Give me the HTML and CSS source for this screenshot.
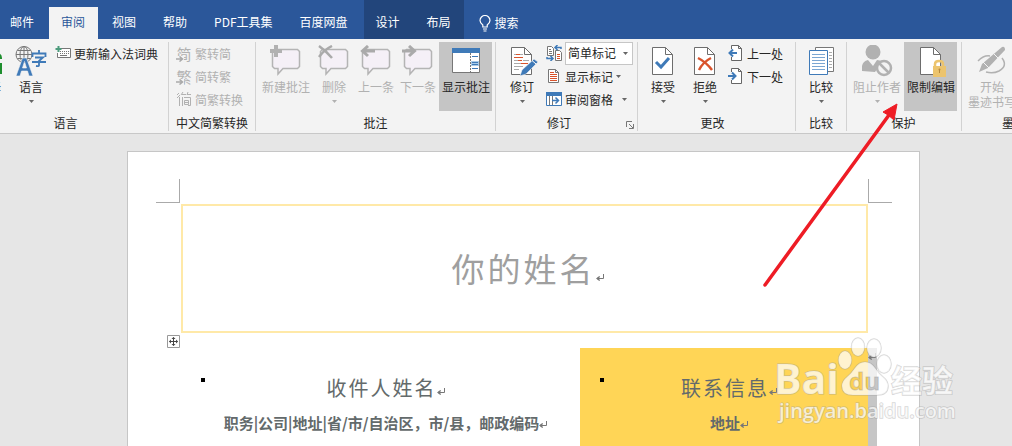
FILE: index.html
```html
<!DOCTYPE html>
<html lang="zh-CN">
<head>
<meta charset="utf-8">
<title>文档 - 审阅</title>
<link rel="stylesheet" href="styles.css">
</head>
<body>
<svg class="defs" aria-hidden="true">
  <symbol id="bubble" viewBox="0 0 32 32"><path d="M4.500 4.500h23l2 2v15l-2 2H13L8 29v-5.500H4.500l-2-2v-15z" fill="#f5f0f7" stroke="#b4b4b4" stroke-width="1.500"/></symbol>
  <symbol id="doc" viewBox="0 0 32 32"><path d="M5.500 2.500h13l7 7v20h-20z" fill="#fff" stroke="#6d6d6d"/><path d="M18.500 2.500v7h7" fill="none" stroke="#6d6d6d"/></symbol>
  <symbol id="caret" viewBox="0 0 5 3"><path d="M0 0h5L2.500 3z" fill="currentColor"/></symbol>
  <symbol id="ret" viewBox="0 0 8 8"><path d="M7.500 0v4.500h-6M3.500 2.500l-2.500 2 2.500 2" fill="none" stroke="currentColor"/><path d="M0 4.500l3.500-2.500v5z" fill="currentColor"/></symbol>
</svg>

<header class="tabs" role="tablist">
  <button class="tab first">邮件</button>
  <button class="tab active">审阅</button>
  <button class="tab">视图</button>
  <button class="tab">帮助</button>
  <button class="tab">PDF工具集</button>
  <button class="tab">百度网盘</button>
  <div class="context"><button class="tab">设计</button><button class="tab">布局</button></div>
  <button class="search"><svg width="12" height="17" viewBox="0 0 12 17" fill="none" stroke="#fff" stroke-width="1.200"><path d="M3.800 12V10C2 8.500 1 7.500 1 5.500a5 5 0 0 1 10 0c0 2-1 3-2.800 4.500v2zM4 14h4M4.500 16h3"/></svg>搜索</button>
</header>

<main class="ribbon">
  <section class="group lang">
    <div class="body">
      <button class="big edge"><svg class="i32" viewBox="0 0 32 32"><path d="M20 8h5q4 1 4 5v1h-4M24 18h5v11h-5z" fill="#1e8e2e"/></svg><span>翻译</span></button>
      <button class="big"><svg class="i32" viewBox="0 0 32 32"><g fill="none" stroke="#777"><circle cx="9" cy="9.500" r="8"/><ellipse cx="9" cy="9.500" rx="4" ry="8"/><path d="M1 9.500h16M9 1.500v16M2.500 5.500h13M2.500 13.500h13"/></g><path d="M1 31L7.500 13h4l6.500 18h-4l-1.500-5h-6L5 31zM7.500 23h4L9.500 16.500z" fill="#3f7ab8" stroke="#f3f3f3" stroke-width=".6"/><path d="M24 5v3M17.500 12V8.500h13V12M20 12.500h8l-4 3.500v4.500q0 1-3 .5M17 17h14" fill="none" stroke="#3f7ab8" stroke-width="1.800"/></svg><span>语言</span><svg class="caret"><use href="#caret"/></svg></button>
      <div class="rows"><button class="row"><svg class="i16" viewBox="0 0 16 16"><path d="M6 3.500h9.500v9H2.500V8" fill="#fff" stroke="#777"/><path d="M5 6.500h9M5 8.500h9" stroke="#777" stroke-dasharray="1 1"/><path d="M5 10.500h7" stroke="#777"/><path d="M3.500 1v6M.500 4h6" stroke="#4c9b7c" stroke-width="2"/></svg>更新输入法词典</button></div>
    </div>
    <h2>语言</h2>
  </section>

  <section class="group convert">
    <div class="body">
      <div class="rows">
        <button class="row" disabled><span class="glyph">简<svg viewBox="0 0 8 6"><path d="M0 3h6M3.500 .5L6.500 3 3.500 5.500" fill="none" stroke="#aaa" stroke-width="1.500"/></svg></span>繁转简</button>
        <button class="row" disabled><span class="glyph">繁<svg viewBox="0 0 8 6"><path d="M0 3h6M3.500 .5L6.500 3 3.500 5.500" fill="none" stroke="#aaa" stroke-width="1.500"/></svg></span>简转繁</button>
        <button class="row" disabled><svg class="i16" viewBox="0 0 16 16" fill="none" stroke="#b1b1b1"><path d="M1 4l2-2M1 7l3-3M3.500 6v9M7 1L5 4M6 3.500h4M12 1l-1 3M11 3.500h4M6.500 6v9M8 6.500h6.500v8H12M8.500 9.500h4v4h-4zM8 11.500h4"/></svg>简繁转换</button>
      </div>
    </div>
    <h2>中文简繁转换</h2>
  </section>

  <section class="group comments">
    <div class="body">
      <button class="big wide" disabled><svg class="i32" viewBox="0 0 32 32"><use href="#bubble"/><path d="M6 0v12M0 6h12" stroke="#b1b1b1" stroke-width="4"/></svg><span>新建批注</span></button>
      <button class="big" disabled><svg class="i32" viewBox="0 0 32 32"><use href="#bubble"/><path d="M1 1q7 5 13 12M14 1Q6 5 1 12" fill="none" stroke="#aaa" stroke-width="2.500"/></svg><span>删除</span><svg class="caret"><use href="#caret"/></svg></button>
      <button class="big" disabled><svg class="i32" viewBox="0 0 32 32"><use href="#bubble"/><path d="M15 6H3M8 1L2.500 6 8 11" fill="none" stroke="#aaa" stroke-width="3"/></svg><span>上一条</span></button>
      <button class="big" disabled><svg class="i32" viewBox="0 0 32 32"><use href="#bubble"/><path d="M0 6h12M7 1l5.500 5L7 11" fill="none" stroke="#aaa" stroke-width="3"/></svg><span>下一条</span></button>
      <button class="big wide on"><svg class="i32" viewBox="0 0 32 32"><path d="M2.500 3.500h27v24h-27z" fill="#fff" stroke="#777"/><path d="M2 3h28v5H2z" fill="#3f7ab8"/><path d="M20.500 8v19" stroke="#777" stroke-dasharray="2 1"/><path d="M21 16h8v5h-8z" fill="#a9cbe8"/><path d="M22 11.500h6M22 17.500h6M22 19.500h6M22 23.500h6" stroke="#3f7ab8"/></svg><span>显示批注</span></button>
    </div>
    <h2>批注</h2>
  </section>

  <section class="group track">
    <div class="body">
      <button class="big"><svg class="i32" viewBox="0 0 32 32"><use href="#doc"/><path d="M8 9.500h2M13 9.500h4M8 15.500h4M17 15.500h6M8 21.500h9M8 24.500h5M8 18.500h7" stroke="#aaa"/><path d="M10 9.500h4M8 12.500h9M12 15.500h4M15 18.500h7" stroke="#d9532c"/><path d="M14 31l2-6L28 14l4 3-12 12z" fill="#3f7ab8" stroke="#f3f3f3" stroke-width=".6"/><path d="M26 15.500l4 3.500" stroke="#fff"/></svg><span>修订</span><svg class="caret"><use href="#caret"/></svg></button>
      <div class="rows">
        <div class="row"><svg class="i16" viewBox="0 0 16 16"><path d="M1.500 1.500h4l2 2v7h-6zM9.500 5.500h4l2 2v8h-6z" fill="#fff" stroke="#777"/><path d="M3 4.500h2M3 6.500h3M3 8.500h3" stroke="#777"/><path d="M11 9.500h3M11 11.500h3M11 13.500h3" stroke="#d9532c"/><path d="M15 4V2.500H9.500M11.500 0L9 2.500 11.500 5M1 12v1.500h6M4.500 11L7 13.500 4.500 16" fill="none" stroke="#3f7ab8" stroke-width="1.500"/></svg><span class="combo"><select aria-label="标记方式"><option>简单标记</option></select><svg class="caret"><use href="#caret"/></svg></span></div>
        <button class="row"><svg class="i16" viewBox="0 0 16 16"><path d="M2.500 1.500h7l3 3v10h-10z" fill="#fff" stroke="#777"/><path d="M9.500 1.500v3h3" fill="none" stroke="#777"/><path d="M4 4.500h4M4 6.500h7M4 8.500h7M4 10.500h7M4 12.500h7" stroke="#d9532c"/></svg>显示标记<svg class="caret"><use href="#caret"/></svg></button>
        <button class="row"><svg class="i16" viewBox="0 0 16 16"><path d="M.500 1.500h15v13H.500z" fill="#fff" stroke="#3f7ab8"/><path d="M0 1h16v4H0z" fill="#3f7ab8"/><path d="M3.500 5v9M6.500 5v9" stroke="#777"/><path d="M6 9.500h6M9.500 6.500l3 3-3 3" fill="none" stroke="#3f7ab8" stroke-width="1.500"/></svg>审阅窗格<svg class="caret far"><use href="#caret"/></svg></button>
      </div>
    </div>
    <h2>修订</h2>
    <button class="launcher" aria-label="修订选项"><svg width="8" height="8" viewBox="0 0 8 8" fill="none" stroke="#777"><path d="M.500 6V.500H6M3 3l4 4M7.500 3v4.500H3"/></svg></button>
  </section>

  <section class="group changes">
    <div class="body">
      <button class="big"><svg class="i32" viewBox="0 0 32 32"><use href="#doc"/><path d="M9 17l5 5 8-9" fill="none" stroke="#3f7ab8" stroke-width="3"/></svg><span>接受</span><svg class="caret"><use href="#caret"/></svg></button>
      <button class="big"><svg class="i32" viewBox="0 0 32 32"><use href="#doc"/><path d="M9 13q8 4 14 12M22 13q-8 4-12 12" fill="none" stroke="#d9532c" stroke-width="2.500"/></svg><span>拒绝</span><svg class="caret"><use href="#caret"/></svg></button>
      <div class="rows">
        <button class="row"><svg class="i16" viewBox="0 0 16 16"><path d="M3.500 4V.500h7l3 3v12h-10V12M10.500 .5v3h3" fill="#fff" stroke="#666"/><path d="M9 8H2M5 4.500L1.500 8 5 11.500" fill="none" stroke="#3f7ab8" stroke-width="2"/></svg>上一处</button>
        <button class="row"><svg class="i16" viewBox="0 0 16 16"><path d="M3.500 4V.500h7l3 3v12h-10V12M10.500 .5v3h3" fill="#fff" stroke="#666"/><path d="M0 8h7M4 4.500L7.500 8 4 11.500" fill="none" stroke="#3f7ab8" stroke-width="2"/></svg>下一处</button>
      </div>
    </div>
    <h2>更改</h2>
  </section>

  <section class="group compare">
    <div class="body">
      <button class="big"><svg class="i32" viewBox="0 0 32 32"><path d="M10.500 2.500h18v24h-18z" fill="#fff" stroke="#777"/><path d="M24 7.500h3M24 10.500h3M24 13.500h3M24 16.500h3M24 19.500h3M24 22.500h3" stroke="#aaa"/><path d="M4.500 5.500h18v24h-18z" fill="#fff" stroke="#3f7ab8"/><path d="M7 9.500h13M7 12.500h13M7 15.500h13M7 18.500h13M7 21.500h13M7 24.500h13" stroke="#7ba6d2"/></svg><span>比较</span><svg class="caret"><use href="#caret"/></svg></button>
    </div>
    <h2>比较</h2>
  </section>

  <section class="group protect">
    <div class="body">
      <button class="big wide" disabled><svg class="i32" viewBox="0 0 32 32"><circle cx="12" cy="7" r="7.500" fill="#b1b1b1"/><path d="M1 26v-5q1-5 6-6l5 6 4-6q3 0 5 2l-7 10z" fill="#b1b1b1"/><circle cx="23" cy="23" r="7" fill="#f3f3f3" stroke="#b1b1b1" stroke-width="2.500"/><path d="M18 18l10 10" stroke="#b1b1b1" stroke-width="2.500"/></svg><span>阻止作者</span><svg class="caret"><use href="#caret"/></svg></button>
      <button class="big wide on"><svg class="i32" viewBox="0 0 32 32"><use href="#doc"/><path d="M20 22v-3q0-3 4-3t4 3v3" fill="none" stroke="#ecc46e" stroke-width="2.500"/><path d="M18 21h13v11H18z" fill="#ecc46e"/><path d="M24.500 24v4" stroke="#b68a3d"/><circle cx="24.500" cy="24.500" r="1" fill="#b68a3d"/></svg><span>限制编辑</span></button>
    </div>
    <h2>保护</h2>
  </section>

  <section class="group ink">
    <div class="body">
      <button class="big wide" disabled><svg class="i32" viewBox="0 0 32 32"><path d="M3 27l3-8L26 2q3-1 3 3L12 23z" fill="#b1b1b1"/><path d="M18 9l5 5M7 17l6 6" stroke="#f3f3f3"/><path d="M2 16q6-6 12-5M26 13q6 8-3 13-6 3-13 1" fill="none" stroke="#b1b1b1" stroke-width="1.500"/></svg><span>开始<br>墨迹书写</span></button>
    </div>
    <h2>墨迹</h2>
  </section>
</main>

<div class="workspace">
  <article class="page">
    <div class="crops"><i class="crop left"></i><i class="crop right"></i></div>
    <h1 class="name">你的姓名<svg class="ret"><use href="#ret"/></svg></h1>
    <div class="columns">
      <svg class="handle" viewBox="0 0 13 13"><path d="M.500 .5h12v12H.500z" fill="#fff" stroke="#999"/><path d="M6.500 2.500v8M2.500 6.500h8" stroke="#444"/><path d="M4.500 4l2-2 2 2zM4.500 9l2 2 2-2zM4 4.500l-2 2 2 2zM9 4.500l2 2-2 2z" fill="#444"/></svg>
      <section class="cell"><h3>收件人姓名<svg class="ret"><use href="#ret"/></svg></h3><p>职务|公司|地址|省/市/自治区，市/县，邮政编码<svg class="ret"><use href="#ret"/></svg></p></section>
      <section class="cell contact"><h3>联系信息<svg class="ret"><use href="#ret"/></svg></h3><p>地址<svg class="ret"><use href="#ret"/></svg></p></section>
      <div class="rowend"><svg class="ret"><use href="#ret"/></svg></div>
    </div>
  </article>
</div>

<svg class="pointer" width="140" height="190" viewBox="0 0 140 190" aria-hidden="true"><path d="M5 184L129 14" stroke="#ee1c25" stroke-width="3.500" stroke-linecap="round"/><path d="M137 3L123 11l5 3 6 5z" fill="#ee1c25" stroke="#ee1c25" stroke-linejoin="round"/></svg>

<svg class="watermark" width="200" height="90" viewBox="0 0 200 90" role="img" aria-label="百度经验">
  <defs><linearGradient id="through" gradientUnits="userSpaceOnUse" x1="0" x2="200" y1="0" y2="0"><stop offset=".49" stop-color="#fbd055"/><stop offset=".49" stop-color="#c6c6c6"/></linearGradient></defs>
  <g fill="#fff" fill-opacity=".72" stroke="#999" stroke-opacity=".4" stroke-width="1.500" paint-order="stroke">
    <ellipse cx="75" cy="24" rx="6.500" ry="9"/><ellipse cx="88" cy="11" rx="6.500" ry="9"/><ellipse cx="104" cy="12" rx="7" ry="9"/><ellipse cx="114" cy="28" rx="7" ry="9"/>
    <path d="M95 26q6 0 10 6 4 6 8 9 5 4 5 9 0 9-11 9H83q-11 0-11-9 0-5 5-9 4-3 8-9t10-6z"/>
    <text class="wm-bai" x="4" y="58">Bai</text>
    <text class="wm-jy" x="121" y="56">经验</text>
    <text class="wm-url" x="9" y="82">jingyan.baidu.com</text>
  </g>
  <text class="wm-du" x="79" y="54">du</text>
</svg>
</body>
</html>
```
FILE: styles.css
```css
* { box-sizing: border-box; }
body {
  margin: 0;
  min-height: 100vh;
  display: flex;
  flex-direction: column;
  position: relative;
  overflow: hidden;
  background: #e6e6e6;
  color: #262626;
  font: 12px/16px "Noto Sans CJK SC", sans-serif;
}
button, select { font: inherit; color: inherit; background: none; border: 0; padding: 0; margin: 0; }
h1, h2, h3, p { margin: 0; font-weight: 400; }
svg { flex: none; }
.defs { position: absolute; width: 0; height: 0; }

.tabs { display: flex; gap: 2px; padding-top: 7px; height: 39px; background: #2b579a; color: #fff; }
.tab { padding: 0 13px 2px 12px; white-space: nowrap; }
.tab.first { padding-left: 10px; }
.tab.active { background: #f3f3f3; color: #2b579a; }
.context { display: flex; gap: 2px; margin: -7px 0 0 1px; padding-top: 7px; background: #22457b; }
.search { display: flex; align-items: center; gap: 4px; margin-left: 13px; }

.ribbon { display: flex; overflow: hidden; padding: 3px 0 2px; background: #f3f3f3; border-bottom: 1px solid #c8c8c8; }
.group { flex: none; position: relative; display: flex; flex-direction: column; border-right: 1px solid #d2d2d2; }
.group h2 { margin-top: 4px; font-size: 12px; text-align: center; white-space: nowrap; }
.body { display: flex; height: 69px; }
.big { width: 42px; display: flex; flex-direction: column; align-items: center; padding-top: 3px; white-space: nowrap; }
.big.wide { width: 54px; }
.big.on { width: 53px; padding-left: 1px; background: #c5c5c5; }
.big span { margin-top: 2px; line-height: 15px; }
.big .caret { margin-top: 6px; }
.i32 { width: 32px; height: 32px; }
.i16 { width: 16px; height: 16px; margin-top: -1px; }
.caret { width: 5px; height: 3px; color: #666; }
:disabled, :disabled .caret { color: #b1b1b1; }
.rows { display: flex; flex-direction: column; }
.row { display: flex; align-items: center; gap: 3px; height: 23px; white-space: nowrap; }
.row .far { margin-left: 6px; }
.combo { position: relative; display: flex; }
.combo select { appearance: none; width: 68px; height: 23px; padding: 0 0 2px 2px; background: #fff; border: 1px solid #c6c6c6; }
.combo .caret { position: absolute; right: 5px; top: 10px; }
.glyph { position: relative; width: 16px; font-size: 15px; color: #b1b1b1; }
.glyph svg { position: absolute; left: 0; bottom: 0; width: 8px; height: 6px; background: #f3f3f3; }

.lang { margin-left: -38px; padding-right: 10px; }
.lang h2 { padding-left: 11px; }
.lang .edge { margin-left: 6px; }
.lang .rows { margin-left: 3px; }
.convert { padding: 0 7px; }
.comments { padding: 0 3px; }
.protect { padding: 0 4px 0 3px; }
.track { padding: 0 4px 0 5px; }
.track h2 { padding-right: 16px; }
.track .rows { margin-left: 3px; }
.launcher { position: absolute; right: 3px; bottom: 2px; height: 8px; display: flex; }
.changes { padding: 0 12px 0 4px; }
.changes .rows { margin-left: 2px; }
.compare { padding: 0 4px; }
.ink { width: 102px; padding-left: 3px; }

.workspace { flex: 1; display: flex; justify-content: center; padding: 17px 0 0 35px; }
.page { flex: 0 1 793px; background: #fff; border: 1px solid #c6c6c6; border-bottom: 0; }
.crops { display: flex; justify-content: space-between; padding: 27px 27px 0 28px; }
.crop { width: 24px; height: 24px; border-bottom: 1px solid #aaa; }
.crop.left { border-right: 1px solid #aaa; }
.crop.right { border-left: 1px solid #aaa; }
.name {
  margin: 1px 51px 0 53px;
  padding: 38px 0 39px 6px;
  border: 2px solid #ffe9a8;
  color: #9f9f9f;
  font-size: 33px;
  line-height: 48px;
  letter-spacing: 3px;
  text-align: center;
}
.ret { width: 8px; height: 8px; color: #777; }
.columns { position: relative; display: grid; grid-template-columns: 399fr 288fr 9px; margin: 15px 42px 0 53px; color: #636a6b; }
.handle { position: absolute; left: -14px; top: -13px; width: 13px; height: 13px; }
.cell { position: relative; padding: 24px 0 12px 10px; text-align: center; }
.cell::before { content: ""; position: absolute; left: 20px; top: 30px; width: 4px; height: 4px; background: #000; }
.cell h3 { font-size: 20px; line-height: 32px; letter-spacing: 2px; }
.cell p { margin-top: 7px; font-size: 15px; line-height: 24px; font-weight: 700; white-space: nowrap; }
.contact { background: #ffd556; }
.rowend { background: #c6c6c6; }

.pointer { position: absolute; left: 760px; top: 101px; }
.watermark { position: absolute; left: 770px; top: 336px; }
.wm-bai { font: 700 41px "Open Sans", sans-serif; }
.wm-du { font: 700 24px "Open Sans", sans-serif; fill: url(#through); stroke: #999; stroke-opacity: .4; }
.wm-jy { font: 700 31px "Noto Sans CJK SC", sans-serif; }
.wm-url { font: 600 20px "Open Sans", sans-serif; }
```
